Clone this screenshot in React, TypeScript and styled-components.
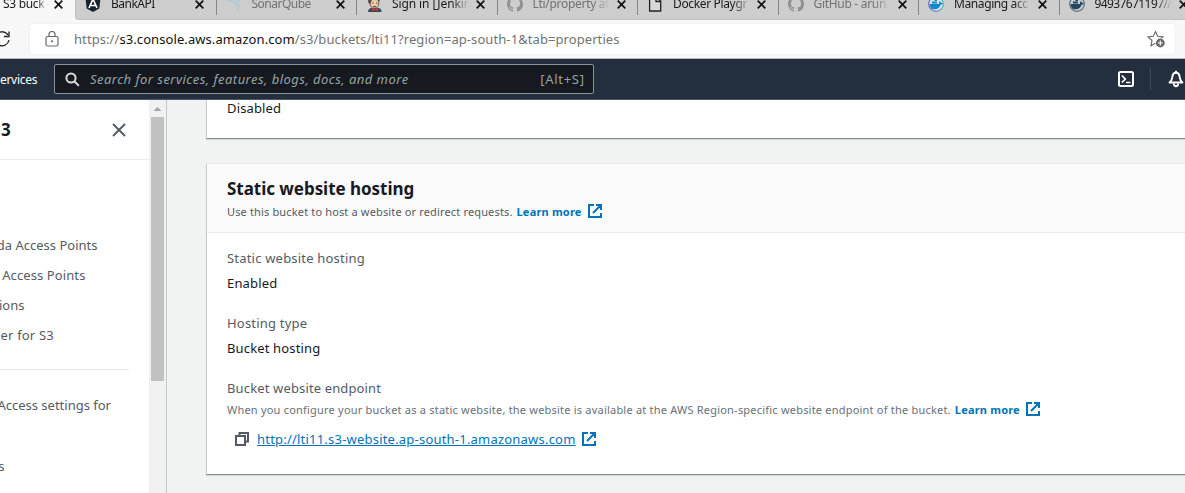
import React from 'react';
import styled, { createGlobalStyle, css } from 'styled-components';

const Global = createGlobalStyle`
  * { box-sizing: border-box; }
  html, body { margin: 0; height: 100%; overflow: hidden; }
  body { font-family: 'Noto Sans', 'Open Sans', sans-serif; background: #f1f3f3; }
`;

const Page = styled.div`
  display: flex;
  flex-direction: column;
  width: 1185px;
  height: 493px;
  overflow: hidden;
`;

/* ---------- browser chrome ---------- */
const TabStrip = styled.div`
  display: flex;
  height: 20px;
  flex: none;
  background: #f7f7f7;
  overflow: hidden;
`;
const ActiveTab = styled.div`
  display: flex;
  width: 75px;
  flex: none;
  padding-left: 3px;
`;
const InactiveTabs = styled.div`
  display: flex;
  flex: 1;
  min-width: 0;
  background: #cdcdcd;
  border-bottom: 1px solid #c2c2c2;
  border-left: 1px solid #bdbdbd;
  border-bottom-left-radius: 4px;
  overflow: hidden;
`;
const Tab = styled.div`
  display: flex;
  flex: none;
  width: 140.5px;
  padding-left: 9px;
  &:not(:last-child)::after {
    content: '';
    width: 1px;
    height: 15px;
    background: #858585;
    margin-left: auto;
  }
`;
const Favicon = styled.svg`
  flex: none;
  width: 16px;
  height: 16px;
  margin-top: -4px;
  margin-right: 10px;
`;
const TabTitle = styled.span<{ $w: number; $dim?: boolean; $ls?: number }>`
  flex: none;
  width: ${(p) => p.$w}px;
  height: 18px;
  margin-top: -5px;
  overflow: hidden;
  white-space: nowrap;
  font: 12px/18px 'Noto Sans', sans-serif;
  letter-spacing: ${(p) => p.$ls ?? 0}px;
  color: ${(p) => (p.$dim ? '#727272' : '#1a1a1a')};
  mask-image: linear-gradient(to right, #000 78%, transparent);
`;
const TabClose = styled.svg`
  flex: none;
  width: 9px;
  height: 9px;
  margin: 0 0 0 7px;
`;
const AddressRow = styled.div`
  display: flex;
  align-items: center;
  height: 39px;
  flex: none;
  background: #f7f7f7;
  border-bottom: 1px solid #b5b7b9;
  padding-right: 10px;
`;
const Reload = styled.svg`
  width: 18px;
  height: 20px;
  margin-left: -7px;
  margin-right: 19px;
  flex: none;
`;
const AddressBox = styled.div`
  display: flex;
  align-items: center;
  flex: 1;
  height: 30px;
  border-radius: 4px;
  background: #fff;
  box-shadow: 0 0 2px #e4e4e4;
  padding: 0 9px 0 15px;
`;
const Url = styled.span`
  flex: 1;
  margin-left: 15px;
  font-size: 13px;
  line-height: 18px;
  color: #737373;
  letter-spacing: 0.08px;
  white-space: nowrap;
  b { font-weight: 400; color: #111; }
`;

/* ---------- console header ---------- */
const ConsoleBar = styled.header`
  display: flex;
  align-items: center;
  height: 41px;
  flex: none;
  background: #232f3e;
  border-bottom: 1px solid #4c5866;
`;
const Services = styled.span`
  width: 54px;
  font-size: 12px;
  color: #fff;
  letter-spacing: -0.3px;
`;
const SearchBox = styled.div`
  display: flex;
  align-items: center;
  width: 540px;
  height: 30px;
  border: 1px solid #879596;
  border-radius: 2px;
  background: #16191f;
  padding: 0 9px 0 10px;
  color: #95a5a6;
  font-size: 13px;
`;
const Placeholder = styled.span`
  flex: 1;
  margin-left: 10px;
  font-style: italic;
  letter-spacing: 0.47px;
`;
const Shortcut = styled.span`
  letter-spacing: 0.7px;
  margin-right: -0.7px;
`;
const BarIcons = styled.div`
  display: flex;
  align-items: center;
  margin-left: 523px;
  flex: none;
`;
const Separator = styled.div`
  width: 1px;
  height: 22px;
  background: #414d5c;
  margin: 0 17px 0 15px;
`;

/* ---------- body ---------- */
const Body = styled.div`
  display: flex;
  flex: 1;
  min-height: 0;
`;
const Sidebar = styled.nav`
  width: 149px;
  flex: none;
  background: #fff;
  color: #545b64;
  font-size: 13px;
`;
const SideHead = styled.div`
  display: flex;
  align-items: center;
  justify-content: space-between;
  height: 60px;
  padding: 0 23px 0 1px;
  border-bottom: 1px solid #eaeded;
  font-size: 17px;
  font-weight: 700;
  color: #16191f;
`;
const SideList = styled.div<{ $top: number }>`
  padding-top: ${(p) => p.$top}px;
`;
const SideItem = styled.div<{ $right: number; $h?: number; $ls?: number }>`
  display: flex;
  align-items: center;
  justify-content: flex-end;
  width: ${(p) => p.$right}px;
  height: ${(p) => p.$h ?? 30}px;
  letter-spacing: ${(p) => p.$ls ?? 0}px;
  white-space: nowrap;
`;
const SideRule = styled.div`
  width: 129px;
  height: 1px;
  margin-top: 19px;
  background: #e6e9e9;
`;
const ScrollTrack = styled.div`
  display: flex;
  flex-direction: column;
  align-items: center;
  width: 18px;
  flex: none;
  background: #f1f1f1;
  border-right: 1px solid #c3c8c8;
`;
const ScrollArrow = styled.svg`
  width: 17px;
  height: 17px;
  flex: none;
`;
const ScrollThumb = styled.div`
  width: 13px;
  height: 264px;
  background: #c1c1c1;
`;
const Content = styled.main`
  flex: 1;
  min-width: 0;
  padding-left: 39px;
  background: #f1f3f3;
`;
const panel = css`
  background: #fff;
  border-left: 1px solid #c5cccc;
  border-bottom: 1px solid #7c8c8c;
  box-shadow: 0 1px 1px #d5dbdb;
`;
const PreviousPanel = styled.section`
  ${panel}
  height: 39px;
  padding-left: 20px;
`;
const HostingPanel = styled.section`
  ${panel}
  height: 312px;
  margin-top: 24px;
  border-top: 1px solid #eaeded;
`;
const PanelHead = styled.div`
  height: 69px;
  padding: 13px 0 0 20px;
  background: #fafafa;
  border-bottom: 1px solid #eaeded;
`;
const Title = styled.h2`
  margin: 0;
  font-size: 17px;
  line-height: 24px;
  font-weight: 700;
  color: #16191f;
  letter-spacing: -0.04px;
`;
const Hint = styled.div<{ $ls?: number; $light?: boolean; $h?: number }>`
  display: flex;
  align-items: center;
  height: ${(p) => p.$h ?? 20}px;
  font-size: 11px;
  white-space: nowrap;
  color: ${(p) => (p.$light ? '#687078' : '#545b64')};
  letter-spacing: ${(p) => p.$ls ?? 0}px;
`;
const LearnMore = styled.a`
  display: flex;
  align-items: center;
  gap: 6px;
  margin-left: 4px;
  font-weight: 700;
  letter-spacing: 0.2px;
  color: #0073bb;
`;
const Fields = styled.div`
  display: flex;
  flex-direction: column;
  gap: 15px;
  padding: 13px 0 0 20px;
`;
const Label = styled.div<{ $ls?: number }>`
  height: 25px;
  font-size: 13px;
  line-height: 25px;
  color: #545b64;
  letter-spacing: ${(p) => p.$ls ?? 0.2}px;
`;
const Value = styled.div<{ $h?: number }>`
  height: ${(p) => p.$h ?? 25}px;
  font-size: 13px;
  line-height: ${(p) => p.$h ?? 25}px;
  color: #16191f;
  letter-spacing: 0.15px;
`;
const Endpoint = styled.div`
  display: flex;
  align-items: center;
  height: 22px;
  margin-top: 11px;
  padding-left: 8px;
`;
const EndpointLink = styled.a`
  margin: 0 6px 0 8px;
  font-size: 13px;
  color: #0073bb;
  text-decoration: underline;
  letter-spacing: 0.21px;
`;

const External = () => (
  <svg width="14" height="14" viewBox="0 0 14 14" fill="none" stroke="#0073bb" strokeWidth="2">
    <path d="M6 1H1v12h12V9M8 1h5v5M13 1L5 9" />
  </svg>
);
const Cross = () => (
  <TabClose viewBox="0 0 9 9" stroke="#111" strokeWidth="1.7">
    <path d="M.7.7l7.6 7.6M8.3.7L.7 8.3" />
  </TabClose>
);

const icons: Record<string, React.ReactNode> = {
  angular: (
    <>
      <path d="M8 0l7.5 2.6-1.2 10L8 16l-6.300-3.400L.5 2.600z" fill="#17222c" />
      <path d="M4 12L8 3l4 9M5.700 9.500h4.600" stroke="#fff" strokeWidth="1.6" fill="none" />
    </>
  ),
  sonar: (
    <path d="M1 4c7 0 11 5 12 12M3 1c6 1 9 5 11 10M7 0c3 1 5 3 7 6" stroke="#a9c7d8" strokeWidth="1.100" fill="none" />
  ),
  jenkins: (
    <>
      <path d="M2 16c0-3 2-4 5-4.500l6 .5c2 1 2.500 2 2.500 4z" fill="#34495c" />
      <path d="M3 3c1-4 9-4 10 1l-.5 5c-1 4-6 4-8 1z" fill="#e9c9a5" stroke="#5c4a40" strokeWidth=".8" />
      <path d="M2.500 7C1 2 5-.5 9 .5c4 0 5 4 4 5L10 3 6 4 4 8z" fill="#514640" />
      <path d="M6 7h1.500M10 7h1.500M7 10.500h3" stroke="#5c4a40" strokeWidth="1" />
      <path d="M6 12l3 1 3-1v3l-3-1-3 1z" fill="#d33833" />
    </>
  ),
  github: (
    <path
      fill="#8f9193"
      d="M8 0C3.580 0 0 3.580 0 8c0 3.540 2.290 6.530 5.470 7.590.4.070.55-.17.55-.38 0-.19-.010-.82-.010-1.490-2.010.37-2.530-.49-2.690-.94-.090-.23-.48-.94-.82-1.130-.28-.15-.68-.52-.010-.53.63-.010 1.080.58 1.230.82.72 1.210 1.870.87 2.330.66.070-.52.28-.87.51-1.070-1.780-.2-3.640-.89-3.640-3.950 0-.87.31-1.590.82-2.150-.080-.2-.36-1.020.080-2.120 0 0 .67-.21 2.200.82.64-.18 1.320-.27 2-.27s1.360.09 2 .27c1.530-1.040 2.200-.82 2.200-.82.44 1.100.16 1.920.080 2.120.51.56.82 1.270.82 2.150 0 3.070-1.870 3.750-3.650 3.950.29.25.54.73.54 1.480 0 1.070-.010 1.930-.010 2.200 0 .21.15.46.55.38A8 8 0 0 0 16 8c0-4.420-3.580-8-8-8z"
    />
  ),
  file: <path d="M2.600.7h7L13.700 5v10H2.600zM9 .7V5.500h4.500" fill="#d8d8d8" stroke="#222" strokeWidth="1.300" />,
  docker: (
    <>
      <defs>
        <linearGradient id="ring" x1="0" y1="0" x2="1" y2="0">
          <stop offset="0" stopColor="#7a5bd0" />
          <stop offset="1" stopColor="#4bb8c9" />
        </linearGradient>
      </defs>
      <circle cx="8" cy="8" r="7.300" fill="#d9e3ec" stroke="url(#ring)" strokeWidth="1.200" />
      <path d="M1.500 8h9.500c0-1.500.3-2.500 1-3l1.200 2H15c-.5 1.300-1.300 1.700-2.500 1.700-1 3-3 4.600-6 4.600S2 12 1.500 8zM4 5.500h5v2H4zM6.500 3.200H9V5H6.500z" fill="#1687c9" />
    </>
  ),
  dockerDark: (
    <>
      <circle cx="8" cy="8" r="7.300" fill="#c5cbd0" stroke="#60717e" strokeWidth="1.200" />
      <path d="M1.500 8h9.500c0-1.500.3-2.500 1-3l1.200 2H15c-.5 1.300-1.300 1.700-2.500 1.700-1 3-3 4.600-6 4.600S2 12 1.500 8zM4 5.500h5v2H4zM6.500 3.200H9V5H6.500z" fill="#27465c" />
    </>
  ),
};

const tabs = [
  { icon: 'angular', title: 'BankAPI', ls: -0.5 },
  { icon: 'sonar', title: 'SonarQube', dim: true, ls: -0.5 },
  { icon: 'jenkins', title: 'Sign in [Jenkins', ls: -0.1 },
  { icon: 'github', title: 'Lti/property at', dim: true, ls: -0.3 },
  { icon: 'file', title: 'Docker Playgr', ls: -0.35 },
  { icon: 'github', title: 'GitHub - arun', dim: true, ls: -0.3 },
  { icon: 'docker', title: 'Managing acc', ls: -0.4 },
  { icon: 'dockerDark', title: '94937671197//s', ls: -0.6 },
];

export default function App() {
  return (
    <Page>
      <Global />
      <TabStrip>
        <ActiveTab>
          <TabTitle $w={44} $ls={-0.3}>S3 buck</TabTitle>
          <Cross />
        </ActiveTab>
        <InactiveTabs>
          {tabs.map((t) => (
            <Tab key={t.title}>
              <Favicon viewBox="0 0 16 16">{icons[t.icon]}</Favicon>
              <TabTitle $w={77} $dim={t.dim} $ls={t.ls}>{t.title}</TabTitle>
              <Cross />
            </Tab>
          ))}
        </InactiveTabs>
      </TabStrip>

      <AddressRow>
        <Reload viewBox="0 0 18 20" fill="none" stroke="#222" strokeWidth="1.300">
          <path d="M15 6A7 7 0 1 0 16 11M16 2.500v5h-5" />
        </Reload>
        <AddressBox>
          <svg width="14" height="16" viewBox="0 0 14 16" fill="none" stroke="#6a6a6a" strokeWidth="1.200">
            <rect x="1" y="5.500" width="12" height="9.500" rx="1.500" />
            <path d="M4 5.500V3.500a3 3 0 0 1 6 0v2" />
            <circle cx="7" cy="10.300" r=".5" fill="#6a6a6a" />
          </svg>
          <Url>https://<b>s3.console.aws.amazon.com</b>/s3/buckets/lti11?region=ap-south-1&amp;tab=properties</Url>
          <svg width="19" height="19" viewBox="0 0 19 19">
            <path d="M8.500 1.500l2.200 4.800 5.300.6-3.900 3.600 1 5.100-4.600-2.500L4 15.800l1-5.300L1 6.900l5.300-.6z" fill="none" stroke="#666" strokeWidth="1.100" />
            <circle cx="13.300" cy="13" r="5" fill="#fff" />
            <circle cx="13.300" cy="13" r="4.400" fill="#666" />
            <path d="M13.300 10.500v5M10.800 13h5" stroke="#fff" strokeWidth="1.200" />
          </svg>
        </AddressBox>
      </AddressRow>

      <ConsoleBar>
        <Services>ervices</Services>
        <SearchBox>
          <svg width="15" height="15" viewBox="0 0 15 15" fill="none" stroke="#d5dbdb" strokeWidth="2">
            <circle cx="6" cy="6" r="4.600" />
            <path d="M9.300 9.300l4.600 4.600" />
          </svg>
          <Placeholder>Search for services, features, blogs, docs, and more</Placeholder>
          <Shortcut>[Alt+S]</Shortcut>
        </SearchBox>
        <BarIcons>
          <svg width="18" height="18" viewBox="0 0 18 18" fill="none" stroke="#fff" strokeWidth="2">
            <rect x="2" y="2" width="14" height="14" rx="1.500" />
            <path d="M4.800 5.500L8.300 9l-3.500 3.500M9 12.500h4.500" strokeWidth="1.700" />
          </svg>
          <Separator />
          <svg width="16" height="18" viewBox="0 0 16 18" fill="none" stroke="#fff" strokeWidth="1.900">
            <path d="M1.500 12.500C4 10.500 4 9 4.300 7 4.700 4 6 2.800 8 2.800S11.300 4 11.700 7c.3 2 .3 3.500 2.800 5.500z" strokeLinejoin="round" />
            <path d="M5.800 13.500c0 3.600 4.400 3.600 4.400 0M8 .8v2" />
          </svg>
        </BarIcons>
      </ConsoleBar>

      <Body>
        <Sidebar>
          <SideHead>
            <span>3</span>
            <svg width="14" height="14" viewBox="0 0 14 14" stroke="#545b64" strokeWidth="1.900">
              <path d="M1 1l12 12M13 1L1 13" />
            </svg>
          </SideHead>
          <SideList $top={70}>
            <SideItem $right={97.5}>da Access Points</SideItem>
            <SideItem $right={85.5} $ls={0.1}>Access Points</SideItem>
            <SideItem $right={24.5}>ions</SideItem>
            <SideItem $right={54} $ls={0.2}>er for S3</SideItem>
          </SideList>
          <SideRule />
          <SideList $top={20}>
            <SideItem $right={111}>Access settings for</SideItem>
            <SideItem $right={4.5} $h={92}>s</SideItem>
          </SideList>
        </Sidebar>
        <ScrollTrack>
          <ScrollArrow viewBox="0 0 17 17">
            <path d="M4.500 11l4-4 4 4z" fill="#a3a3a3" />
          </ScrollArrow>
          <ScrollThumb />
        </ScrollTrack>
        <Content>
          <PreviousPanel>
            <Value $h={17}>Disabled</Value>
          </PreviousPanel>
          <HostingPanel>
            <PanelHead>
              <Title>Static website hosting</Title>
              <Hint $ls={0.15}>
                Use this bucket to host a website or redirect requests.
                <LearnMore>Learn more <External /></LearnMore>
              </Hint>
            </PanelHead>
            <Fields>
              <div>
                <Label>Static website hosting</Label>
                <Value>Enabled</Value>
              </div>
              <div>
                <Label>Hosting type</Label>
                <Value>Bucket hosting</Value>
              </div>
              <div>
                <Label $ls={0.14}>Bucket website endpoint</Label>
                <Hint $light $ls={0.21} $h={16}>
                  When you configure your bucket as a static website, the website is available at the AWS Region-specific website endpoint of the bucket.
                  <LearnMore>Learn more <External /></LearnMore>
                </Hint>
                <Endpoint>
                  <svg width="14" height="14" viewBox="0 0 14 14" fill="none" stroke="#545b64" strokeWidth="2">
                    <path d="M1 4h9v9H1zM4.500 4V1H13v8.500h-3" />
                  </svg>
                  <EndpointLink>http://lti11.s3-website.ap-south-1.amazonaws.com</EndpointLink>
                  <External />
                </Endpoint>
              </div>
            </Fields>
          </HostingPanel>
        </Content>
      </Body>
    </Page>
  );
}
